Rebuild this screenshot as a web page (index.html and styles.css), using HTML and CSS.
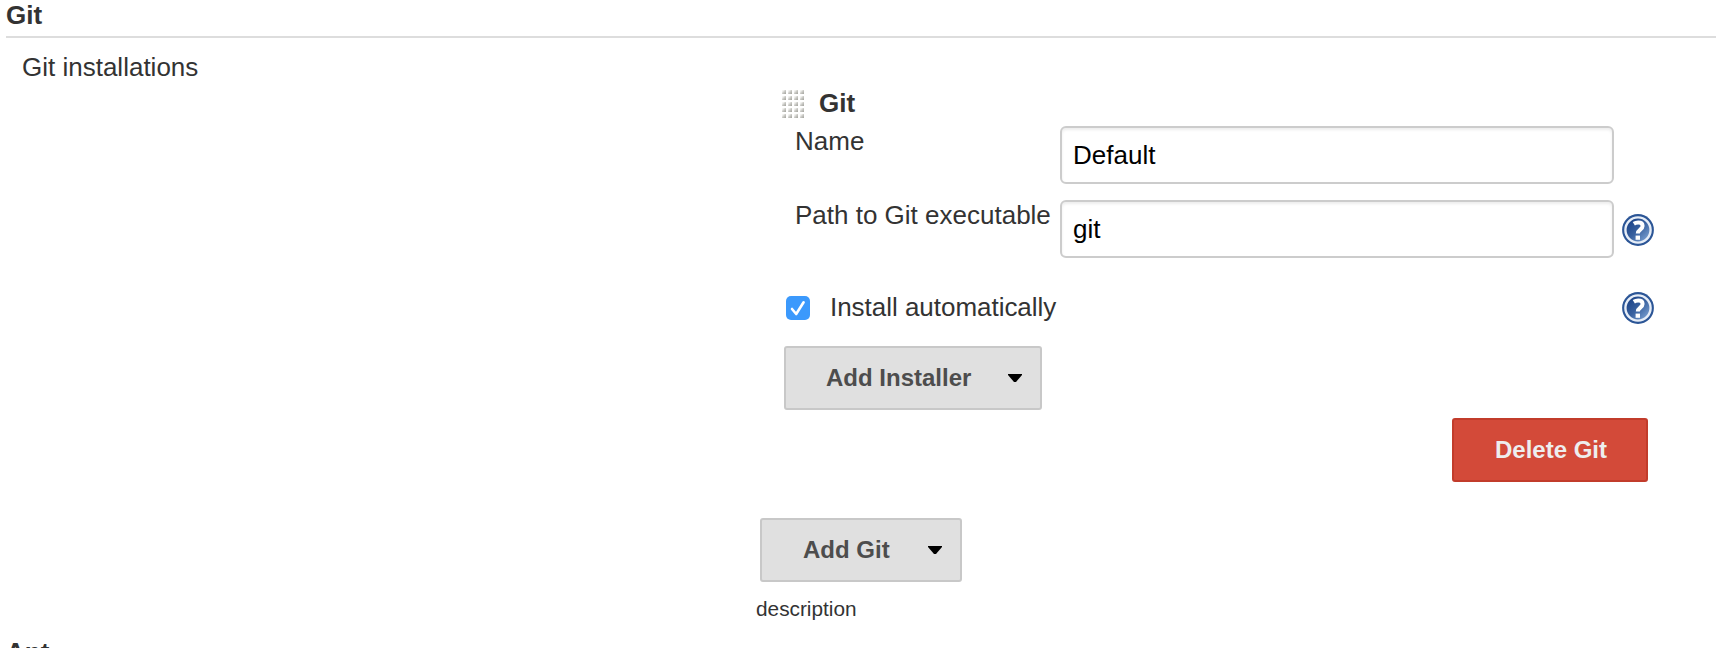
FILE: index.html
```html
<!DOCTYPE html>
<html lang="en">
<head>
<meta charset="utf-8">
<title>Git</title>
<link rel="stylesheet" href="styles.css">
</head>
<body>
<svg class="defs" width="0" height="0">
  <defs>
    <linearGradient id="helpFill" x1="0" y1="0" x2="1" y2="1">
      <stop offset="0.15" stop-color="#1d4488"/>
      <stop offset="0.5" stop-color="#39619f"/>
      <stop offset="0.9" stop-color="#7ba1d2"/>
    </linearGradient>
    <linearGradient id="dotFill" x1="0" y1="0" x2="1" y2="1">
      <stop offset="0.2" stop-color="#f4f4f2"/>
      <stop offset="0.55" stop-color="#c6c6c2"/>
      <stop offset="1" stop-color="#a2a29c"/>
    </linearGradient>
    <pattern id="dots" width="6" height="6" patternUnits="userSpaceOnUse">
      <rect width="4" height="4" fill="url(#dotFill)"/>
    </pattern>
    <symbol id="help" viewBox="0 0 32 32">
      <circle cx="16" cy="16" r="15.9" fill="#2b5596"/>
      <circle cx="16" cy="16" r="12.6" fill="url(#helpFill)" stroke="#e6edf7" stroke-width="2.4"/>
      <path d="M11.8 9.8c1.4-.9 2.8-1.2 4.4-1.2 3 0 4.4 1.2 4.4 3.4 0 3.6-4.8 3.5-4.8 7.4" fill="none" stroke="#fff" stroke-width="4"/>
      <rect x="13.6" y="21.6" width="4.4" height="4.2" fill="#fff"/>
    </symbol>
    <symbol id="caret" viewBox="0 0 14 8">
      <path d="M0 0h14v1L8 8H6L0 1z"/>
    </symbol>
  </defs>
</svg>
<main class="page">
  <h2 class="section-title">Git</h2>
  <section class="section">
    <div class="section-label">Git installations</div>
    <div class="section-body">
      <div class="tool">
        <div class="tool-header">
          <svg class="grip" width="22" height="28"><rect width="22" height="28" fill="url(#dots)"/></svg>
          <span>Git</span>
        </div>
        <div class="field">
          <label for="name">Name</label>
          <input id="name" class="text-input" type="text" value="Default">
        </div>
        <div class="field">
          <label for="path">Path to Git executable</label>
          <input id="path" class="text-input" type="text" value="git">
          <svg class="help"><use href="#help"/></svg>
        </div>
        <div class="check-row">
          <svg class="checkbox" viewBox="0 0 24 24">
            <rect width="24" height="24" rx="5" fill="#3b99fc"/>
            <path d="M6 13l4.2 5L17.6 6.3" fill="none" stroke="#fff" stroke-width="2.6" stroke-linecap="round" stroke-linejoin="round"/>
          </svg>
          <span class="check-label">Install automatically</span>
          <svg class="help"><use href="#help"/></svg>
        </div>
        <button class="button button-installer" type="button">Add Installer<svg class="caret"><use href="#caret"/></svg></button>
        <button class="button button-danger" type="button">Delete Git</button>
      </div>
      <button class="button button-add" type="button">Add Git<svg class="caret"><use href="#caret"/></svg></button>
      <div class="description">description</div>
    </div>
  </section>
  <h2 class="section-title">Ant</h2>
</main>
</body>
</html>
```

FILE: styles.css
```css
* {
  box-sizing: border-box;
}

body {
  margin: 0;
  background: #fff;
  color: #333;
  font: 26px/30px "Liberation Sans", Arial, sans-serif;
}

.defs {
  display: block;
}

.page {
  height: 648px;
  padding: 0 14px 0 6px;
  overflow: hidden;
}

.section-title {
  height: 38px;
  margin: 0;
  border-bottom: 2px solid #ddd;
  font-size: 26px;
  font-weight: bold;
}

.section {
  display: grid;
  grid-template-columns: 733px 1fr;
  height: 599px;
  padding: 14px 0 0 16px;
}

.section-body {
  display: flex;
  flex-direction: column;
  align-items: flex-start;
  padding-top: 36px;
}

.tool {
  display: flex;
  flex-direction: column;
  align-items: flex-start;
  width: 899px;
  padding-left: 27px;
}

.tool-header {
  display: flex;
  align-items: center;
  gap: 15px;
  height: 30px;
  margin-bottom: 8px;
  font-weight: bold;
}

.grip {
  margin-top: 2px;
}

.field {
  display: flex;
  width: 100%;
  height: 58px;
  margin-bottom: 16px;
  padding-left: 13px;
}

.field label {
  width: 265px;
  white-space: nowrap;
}

.text-input {
  width: 554px;
  height: 58px;
  padding: 0 11px;
  border: 2px solid #ccc;
  border-radius: 6px;
  background: #fff;
  box-shadow: inset 0 2px 3px rgba(0, 0, 0, 0.075);
  color: #000;
  font: inherit;
}

.help {
  flex: none;
  width: 32px;
  height: 32px;
}

.field .help {
  margin: 14px 0 0 8px;
}

.check-row {
  display: flex;
  align-items: flex-start;
  width: 100%;
  height: 32px;
  margin: 18px 0 22px;
  padding-left: 4px;
}

.checkbox {
  width: 24px;
  height: 24px;
  margin-top: 4px;
}

.check-label {
  flex: 1;
  padding-left: 20px;
  letter-spacing: -0.03px;
}

.button {
  display: flex;
  align-items: center;
  height: 64px;
  padding: 0 18px 0 41px;
  border: 2px solid #c8c8c8;
  border-radius: 3px;
  background: #e0e0e0;
  color: #4d4d4d;
  font: bold 24px/28px "Liberation Sans", Arial, sans-serif;
  white-space: nowrap;
}

.button-installer {
  width: 258px;
  margin: 0 0 8px 2px;
  padding-left: 40px;
}

.button-danger {
  align-self: flex-end;
  width: 196px;
  margin: 0 6px 36px 0;
  border-color: #c23c2b;
  background: #d34a39;
  color: #eee;
}

.button-add {
  width: 202px;
  margin: 0 0 15px 5px;
}

.caret {
  width: 14px;
  height: 8px;
  margin-left: auto;
}

.description {
  padding-left: 1px;
  font-size: 20.8px;
  line-height: 24px;
}
```
